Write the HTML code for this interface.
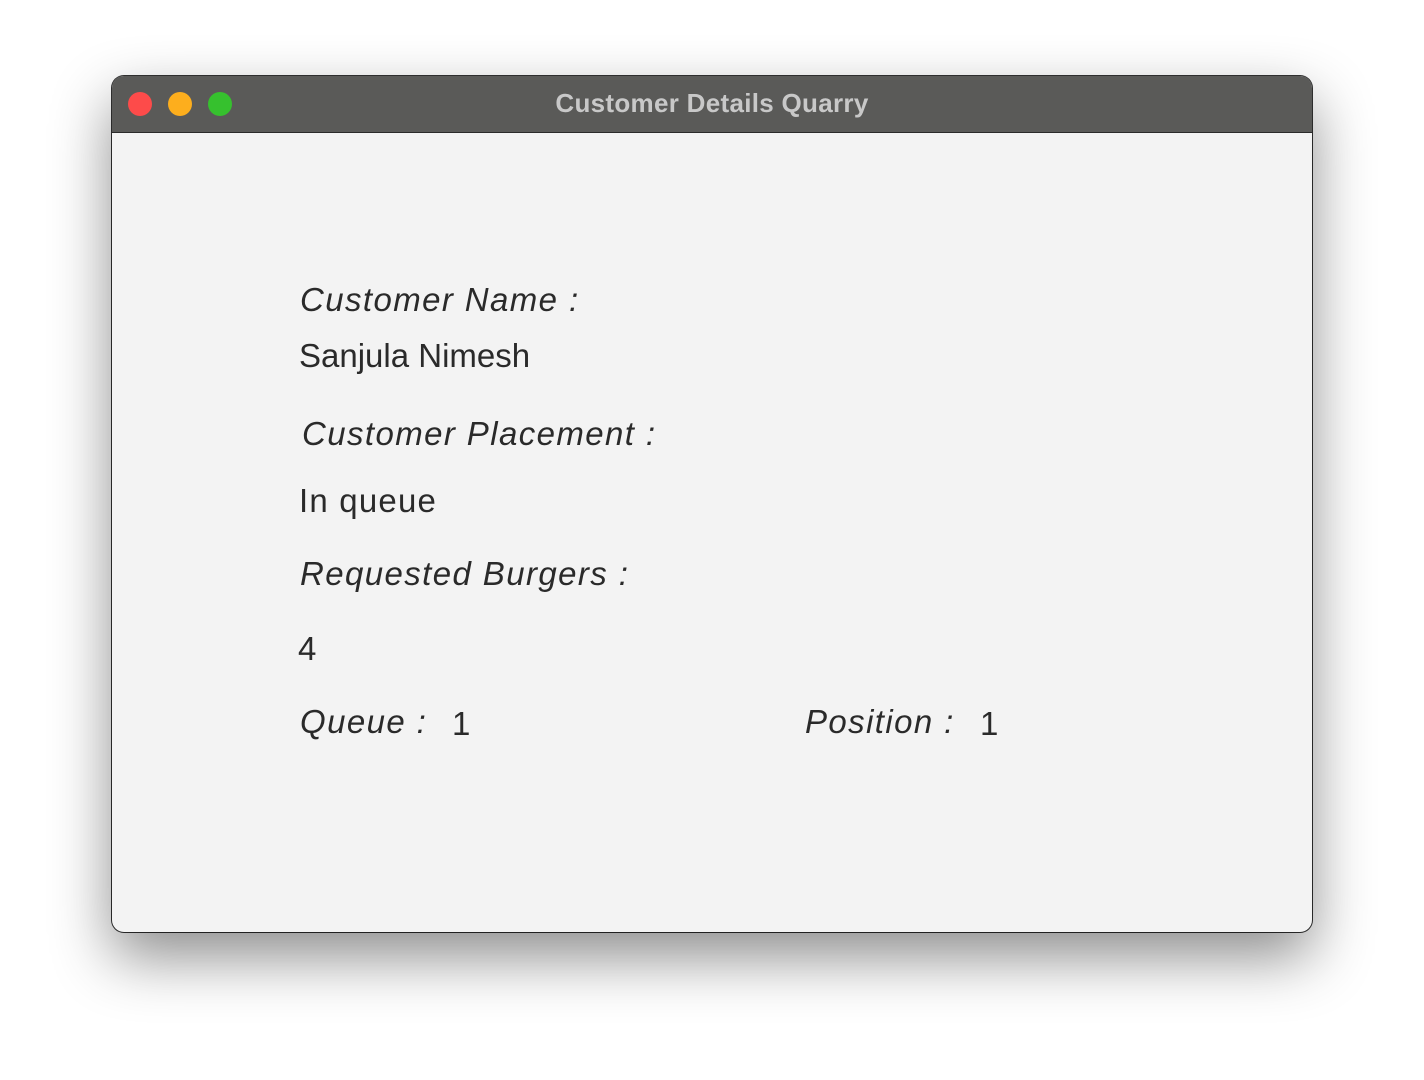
<!DOCTYPE html>
<html><head><style>
body{margin:0;width:1424px;height:1080px;background:#fff;position:relative;overflow:hidden;font-family:"Liberation Sans",sans-serif}
.win{position:absolute;left:112px;top:76px;width:1200px;height:856px;border-radius:12px;background:#f3f3f3;box-shadow:0 25px 60px rgba(0,0,0,.45),0 0 0 1px #333;overflow:hidden}
.tb{height:56px;background:#5a5a58;border-bottom:1px solid #2a2a2a;position:relative}
.d{position:absolute;top:16px;width:24px;height:24px;border-radius:50%}
.tt{position:absolute;left:0;right:0;top:12px;text-align:center;color:#c8c8c8;font-weight:bold;font-size:26px;letter-spacing:0.3px}
.t{position:absolute;color:#2a2a2a;font-size:33px;white-space:nowrap;line-height:1}
.i{font-style:italic;letter-spacing:1.4px}
</style></head><body>
<div class="win">
<div class="tb"><div class="d" style="left:16px;background:#fd4b4a"></div><div class="d" style="left:56px;background:#fdae1d"></div><div class="d" style="left:96px;background:#36c12e"></div><div class="tt">Customer Details Quarry</div></div>
</div>
<div class="t i" style="left:300px;top:283px">Customer Name :</div>
<div class="t" style="left:299px;top:339px">Sanjula Nimesh</div>
<div class="t i" style="left:302px;top:417px">Customer Placement :</div>
<div class="t" style="left:299px;top:484px;letter-spacing:1.2px">In queue</div>
<div class="t i" style="left:300px;top:557px">Requested Burgers :</div>
<div class="t" style="left:298px;top:632px">4</div>
<div class="t i" style="left:300px;top:705px">Queue :</div>
<div class="t" style="left:452px;top:707px">1</div>
<div class="t i" style="left:805px;top:705px">Position :</div>
<div class="t" style="left:980px;top:707px">1</div>
</body></html>
